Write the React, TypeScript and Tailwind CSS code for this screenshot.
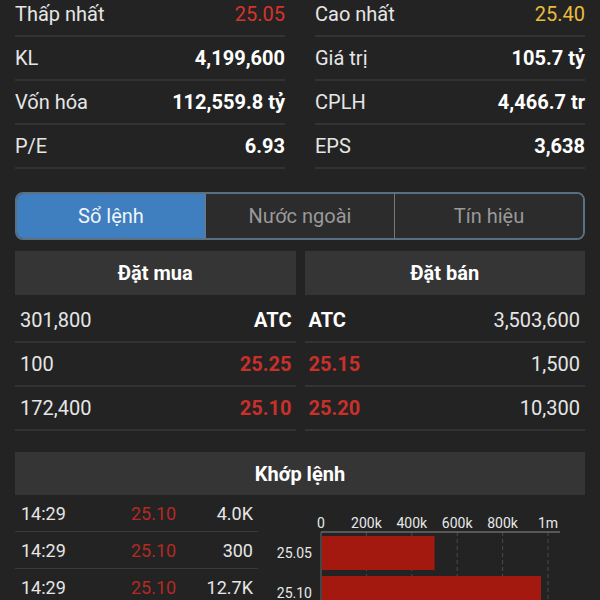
import React from 'react';

const leftStats = [
  { label: 'Thấp nhất', value: '25.05', color: 'text-[#d8322b] font-normal' },
  { label: 'KL', value: '4,199,600', color: 'text-white font-bold' },
  { label: 'Vốn hóa', value: '112,559.8 tỷ', color: 'text-white font-bold' },
  { label: 'P/E', value: '6.93', color: 'text-white font-bold' },
];

const rightStats = [
  { label: 'Cao nhất', value: '25.40', color: 'text-[#e9bb3c] font-normal' },
  { label: 'Giá trị', value: '105.7 tỷ', color: 'text-white font-bold' },
  { label: 'CPLH', value: '4,466.7 tr', color: 'text-white font-bold' },
  { label: 'EPS', value: '3,638', color: 'text-white font-bold' },
];

const bids = [
  { vol: '301,800', price: 'ATC', red: false },
  { vol: '100', price: '25.25', red: true },
  { vol: '172,400', price: '25.10', red: true },
];

const asks = [
  { price: 'ATC', vol: '3,503,600', red: false },
  { price: '25.15', vol: '1,500', red: true },
  { price: '25.20', vol: '10,300', red: true },
];

const trades = [
  { time: '14:29', price: '25.10', vol: '4.0K' },
  { time: '14:29', price: '25.10', vol: '300' },
  { time: '14:29', price: '25.10', vol: '12.7K' },
];

const StatColumn = ({ rows }: { rows: typeof leftStats }) => (
  <div className="flex-1 flex flex-col">
    {rows.map((r, i) => (
      <div key={i} className="h-[44px] flex items-center justify-between border-b-2 border-[#333333]">
        <span className="text-[20px] text-[#e6e6e6]">{r.label}</span>
        <span className={`text-[20px] ${r.color}`}>{r.value}</span>
      </div>
    ))}
  </div>
);

const VolumeChart = () => {
  const x0 = 51;
  const scale = 227 / 1000000;
  const ticks = [
    { v: 0, l: '0' },
    { v: 200000, l: '200k' },
    { v: 400000, l: '400k' },
    { v: 600000, l: '600k' },
    { v: 800000, l: '800k' },
    { v: 1000000, l: '1m' },
  ];
  const bars = [
    { label: '25.05', v: 496000, y: 41 },
    { label: '25.10', v: 965000, y: 81 },
  ];
  return (
    <svg width="315" height="120" className="block" style={{ fontFamily: 'Roboto, sans-serif' }}>
      {ticks.slice(1).map((t) => (
        <line
          key={t.l}
          x1={x0 + t.v * scale}
          x2={x0 + t.v * scale}
          y1={37}
          y2={120}
          stroke="#4a4a4a"
          strokeWidth="1"
          strokeDasharray="4 3"
        />
      ))}
      {bars.map((b) => (
        <g key={b.label}>
          <rect x={x0 + 1} y={b.y} width={b.v * scale} height={34} fill="#a3180f" />
          <text x={42} y={b.y + 22} textAnchor="end" fontSize="14" fill="#e8e8e8">
            {b.label}
          </text>
        </g>
      ))}
      <line x1={x0} x2={290} y1={37} y2={37} stroke="#6a6a6a" strokeWidth="1.5" />
      <line x1={x0} x2={x0} y1={37} y2={120} stroke="#6a6a6a" strokeWidth="1" />
      {ticks.map((t) => (
        <text key={t.l} x={x0 + t.v * scale} y={33} textAnchor="middle" fontSize="14" fill="#e8e8e8">
          {t.l}
        </text>
      ))}
    </svg>
  );
};

export default function App() {
  return (
    <div className="w-[600px] h-[600px] overflow-hidden bg-[#232323] font-['Roboto',sans-serif]">
      {/* Thông tin cổ phiếu */}
      <div className="flex gap-[30px] px-[15px] -mt-[7px]">
        <StatColumn rows={leftStats} />
        <StatColumn rows={rightStats} />
      </div>

      {/* Tabs */}
      <div className="mx-[15px] mt-[23px] h-[48px] flex rounded-[8px] border-2 border-[#5b6f82] overflow-hidden">
        <div className="flex-1 flex items-center justify-center bg-[#3f7fbf] text-[20px] text-[#f2f6fa]">Sổ lệnh</div>
        <div className="flex-1 flex items-center justify-center bg-[#2c2c2c] text-[20px] text-[#9a9a9a] border-l border-[#777777]">Nước ngoài</div>
        <div className="flex-1 flex items-center justify-center bg-[#2c2c2c] text-[20px] text-[#9a9a9a] border-l border-[#777777]">Tín hiệu</div>
      </div>

      {/* Sổ lệnh */}
      <div className="flex gap-[9px] px-[15px] mt-[11px]">
        <div className="flex-1">
          <div className="h-[44px] bg-[#353535] flex items-center justify-center text-[20px] font-bold text-white">Đặt mua</div>
          <div className="mt-[4px]">
            {bids.map((b, i) => (
              <div key={i} className="h-[44px] flex items-center justify-between pl-[5px] pr-[4px] border-b-2 border-[#333333]">
                <span className="text-[20px] text-[#e6e6e6]">{b.vol}</span>
                <span className={`text-[20px] font-bold ${b.red ? 'text-[#c9302a]' : 'text-white'}`}>{b.price}</span>
              </div>
            ))}
          </div>
        </div>
        <div className="flex-1">
          <div className="h-[44px] bg-[#353535] flex items-center justify-center text-[20px] font-bold text-white">Đặt bán</div>
          <div className="mt-[4px]">
            {asks.map((a, i) => (
              <div key={i} className="h-[44px] flex items-center justify-between pl-[4px] pr-[5px] border-b-2 border-[#333333]">
                <span className={`text-[20px] font-bold ${a.red ? 'text-[#c9302a]' : 'text-white'}`}>{a.price}</span>
                <span className="text-[20px] text-[#e6e6e6]">{a.vol}</span>
              </div>
            ))}
          </div>
        </div>
      </div>

      {/* Khớp lệnh */}
      <div className="mx-[15px] mt-[21px] h-[43px] bg-[#353535] flex items-center justify-center text-[20px] font-bold text-white">
        Khớp lệnh
      </div>
      <div className="flex">
        <div className="ml-[15px] w-[243px]">
          {trades.map((t, i) => (
            <div key={i} className="h-[37px] flex items-center border-b border-[#3a3a3a] pl-[6px] pr-[5px] text-[18px]">
              <span className="w-[110px] text-[#e6e6e6]">{t.time}</span>
              <span className="w-[70px] text-[#b32a22]">{t.price}</span>
              <span className="flex-1 text-right text-[#e6e6e6]">{t.vol}</span>
            </div>
          ))}
        </div>
        <div className="ml-[12px]">
          <VolumeChart />
        </div>
      </div>
    </div>
  );
}
